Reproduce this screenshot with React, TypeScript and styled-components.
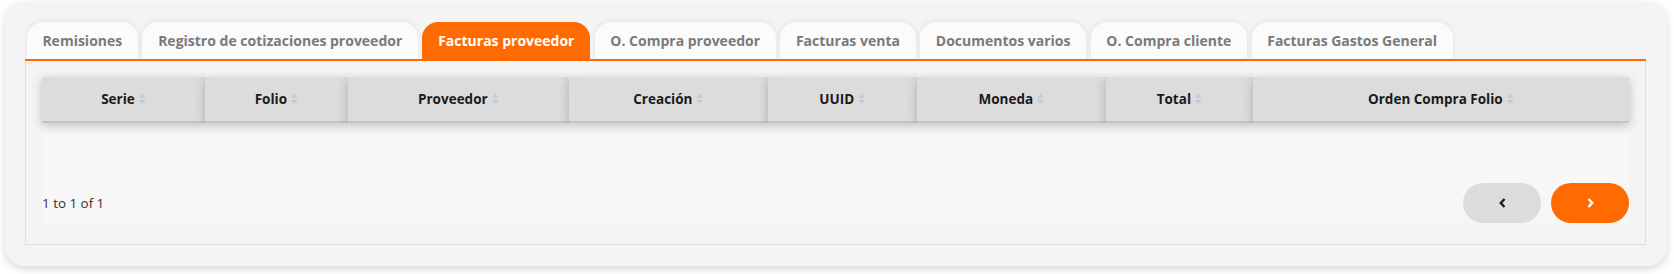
import React from "react";
import styled, { createGlobalStyle } from "styled-components";

const GlobalStyle = createGlobalStyle`
  html, body { margin: 0; padding: 0; background: #ffffff; }
  body { font-family: "Open Sans", "Noto Sans", sans-serif; }
  * { box-sizing: border-box; }
`;

const Page = styled.div`
  padding: 2px 7px 8px 5px;
`;

const Card = styled.div`
  background: #f4f4f4;
  border-radius: 20px;
  box-shadow: 0 3px 8px rgba(0, 0, 0, 0.16);
  padding: 20px 21px 21px 20px;
`;

const TabList = styled.div`
  display: flex;
  align-items: flex-end;
  gap: 4.5px;
  padding: 0 1.7px;
  border-bottom: 2px solid #ff6b00;
`;

const Tab = styled.button<{ $active?: boolean }>`
  height: 37px;
  padding: 0 15.7px;
  border: none;
  border-radius: 16px 16px 0 0;
  background: ${(p) => (p.$active ? "#ff6b00" : "#fbfbfb")};
  color: ${(p) => (p.$active ? "#ffffff" : "#7a7a7a")};
  box-shadow: ${(p) => (p.$active ? "none" : "0 -1px 6px rgba(0,0,0,0.07)")};
  font-family: "Open Sans", sans-serif;
  font-weight: 700;
  font-size: 14px;
  line-height: 37px;
  white-space: nowrap;
  cursor: pointer;
`;

const TabPanel = styled.div`
  border: 1px solid #d6e0ec;
  border-top: none;
  padding: 16px 16px 21px 16px;
`;

const TableBox = styled.div`
  background: #f7f7f7;
`;

const HeaderRow = styled.div<{ $cols: string }>`
  display: grid;
  grid-template-columns: ${(p) => p.$cols};
`;

const HeaderCell = styled.div`
  height: 46px;
  background: #dcdcdc;
  border-bottom: 2px solid #c4c4c4;
  box-shadow: 0 3px 10px rgba(0, 0, 0, 0.22);
  display: flex;
  align-items: center;
  justify-content: center;
  gap: 4px;
  font-family: "Open Sans", sans-serif;
  font-weight: 700;
  font-size: 13.5px;
  color: #1a1a1a;
  white-space: nowrap;
`;

const EmptyBody = styled.div`
  height: 60px;
`;

const Footer = styled.div`
  display: flex;
  align-items: center;
  justify-content: space-between;
  height: 40px;
`;

const Info = styled.span`
  font-family: "Open Sans", sans-serif;
  font-size: 13.4px;
  color: #333333;
`;

const Pager = styled.div`
  display: flex;
  gap: 10px;
`;

const PageButton = styled.button<{ $primary?: boolean }>`
  width: 78px;
  height: 40px;
  border: none;
  border-radius: 20px;
  background: ${(p) => (p.$primary ? "#ff6b00" : "#dcdcdc")};
  color: ${(p) => (p.$primary ? "#ffffff" : "#1d1d1d")};
  display: flex;
  align-items: center;
  justify-content: center;
  padding: 0;
  cursor: pointer;
`;

const SortIcon = () => (
  <svg width="7" height="10" viewBox="0 0 7 10" aria-hidden="true">
    <polygon points="0,4 3.5,0 7,4" fill="#bfcadb" />
    <polygon points="0,6 3.5,10 7,6" fill="#bfcadb" />
  </svg>
);

const Chevron = ({ dir }: { dir: "left" | "right" }) => (
  <svg width="7" height="10" viewBox="0 0 7 10" aria-hidden="true">
    <path
      d={dir === "left" ? "M5.5 1 L1.8 5 L5.5 9" : "M1.5 1 L5.2 5 L1.5 9"}
      fill="none"
      stroke="currentColor"
      strokeWidth="2.4"
    />
  </svg>
);

const tabs = [
  "Remisiones",
  "Registro de cotizaciones proveedor",
  "Facturas proveedor",
  "O. Compra proveedor",
  "Facturas venta",
  "Documentos varios",
  "O. Compra cliente",
  "Facturas Gastos General",
];

const columns: { label: string; width: number }[] = [
  { label: "Serie", width: 163 },
  { label: "Folio", width: 142.7 },
  { label: "Proveedor", width: 221.3 },
  { label: "Creación", width: 198.7 },
  { label: "UUID", width: 149 },
  { label: "Moneda", width: 189.3 },
  { label: "Total", width: 146.7 },
  { label: "Orden Compra Folio", width: 376.3 },
];

export default function App() {
  const cols = columns.map((c) => `${c.width}fr`).join(" ");
  return (
    <>
      <GlobalStyle />
      <Page>
        <Card>
          <TabList>
            {tabs.map((t) => (
              <Tab key={t} $active={t === "Facturas proveedor"}>
                {t}
              </Tab>
            ))}
          </TabList>
          <TabPanel>
            <TableBox>
              <HeaderRow $cols={cols}>
                {columns.map((c) => (
                  <HeaderCell key={c.label}>
                    {c.label}
                    <SortIcon />
                  </HeaderCell>
                ))}
              </HeaderRow>
              <EmptyBody />
              <Footer>
                <Info>1 to 1 of 1</Info>
                <Pager>
                  <PageButton aria-label="Anterior">
                    <Chevron dir="left" />
                  </PageButton>
                  <PageButton $primary aria-label="Siguiente">
                    <Chevron dir="right" />
                  </PageButton>
                </Pager>
              </Footer>
            </TableBox>
          </TabPanel>
        </Card>
      </Page>
    </>
  );
}
